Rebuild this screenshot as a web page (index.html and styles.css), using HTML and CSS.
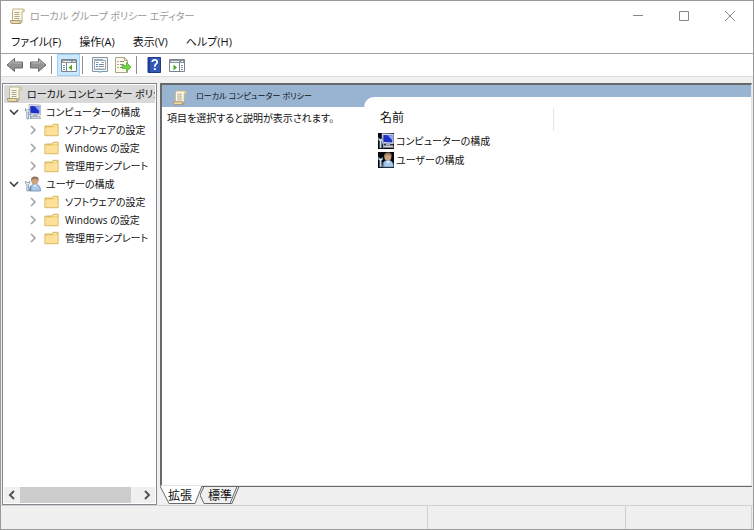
FILE: index.html
```html
<!DOCTYPE html>
<html lang="ja">
<head>
    <meta charset="UTF-8">
    <meta name="viewport" content="width=device-width, initial-scale=1.0">
    <title>ローカル グループ ポリシー エディター</title>
    <link rel="stylesheet" href="styles.css">
</head>
<body>
    <!-- shared icons -->
    <svg class="sprite" aria-hidden="true">
        <symbol id="i-scroll" viewBox="0 0 16 16">
            <path d="M4 1h9.500q2 0 2 1.500T14 4h-1v9H3.500V3z" fill="#fff8e0" stroke="#bdb08c"/>
            <path d="M13 1.200q1.800.200 1.800 1.400T13.200 3.800z" fill="#d7c48f"/>
            <path d="M1.500 12.500h9.500q-.800 3 1 3h-9q-1.800 0-1.500-3z" fill="#ecd9a0" stroke="#a39a7c"/>
            <path d="M11.500 15.300q1.700-.600 1.500-2.800" fill="none" stroke="#a39a7c"/>
            <path d="M5.500 4.500h5M5.500 6.500h5M5.500 8.500h5M5.500 10.500h5" stroke="#a9a498"/>
        </symbol>
        <symbol id="i-folder" viewBox="0 0 16 16">
            <path d="M.5 3.500h8l1.500-2h5.500v13H.500z" fill="#f0cf77" stroke="#d2aa4a"/>
            <path d="M10 3h4.500" stroke="#fff6d8"/>
            <path d="M1 5.500h8.500l1-1H15V14H1z" fill="#fbe19a"/>
        </symbol>
        <symbol id="i-computer" viewBox="0 0 16 16">
            <path d="M4 .5l11.500.5v10L4 10.500z" fill="#dfe3ee" stroke="#8e97b5" stroke-width=".6"/>
            <path d="M5.300 2l9 .300v7.200l-9-.400z" fill="#1c2fc4"/>
            <path d="M9.500 2.200l4.800.1v5z" fill="#8fa8f2"/>
            <path d="M8 10.800h4l.500 1.700H7.500z" fill="#a9afbd"/>
            <path d="M6 12.500h9l.500 2H6z" fill="#d3d6dd" stroke="#8b8f9b" stroke-width=".6"/>
            <path d="M.5 4.500V7l1.300 1V15h1.700V8l1.200-1V4.500L3.500 6H1.800z" fill="#e4edf5" stroke="#5e7891" stroke-width=".6"/>
            <path d="M5.500 8.500V15" stroke="#8ca5ba" stroke-width="1.400"/>
        </symbol>
        <symbol id="i-user" viewBox="0 0 16 16">
            <path d="M4.500 15q0-6 4-6.500h3q4 .5 4 6.500z" fill="#a8c9e8" stroke="#5a84ab" stroke-width=".7"/>
            <path d="M8.500 8.500l1.500 3 1.800-3z" fill="#f4f8fc"/>
            <circle cx="9.800" cy="5" r="3.500" fill="#c9a27e"/>
            <path d="M6 5q-.5-4.500 4-4.500T13.500 5q-1-2.500-3.500-2.500T6 5z" fill="#927258"/>
            <path d="M.5 5v2.500l1.300 1V15h1.700V8.500l1.200-1V5L3.500 6.500H1.800z" fill="#e4edf5" stroke="#5e7891" stroke-width=".6"/>
            <path d="M5.500 10v5" stroke="#6988a5" stroke-width="1.400"/>
        </symbol>
        <symbol id="i-arrow" viewBox="0 0 18 16">
            <path d="M1 8l7.500-6.500V5H16.500v6H8.500v3.500z" fill="#939393" stroke="#6a6a6a"/>
            <path d="M3 7.500L7.500 3.600V6h8" fill="none" stroke="#bdbdbd"/>
        </symbol>
        <symbol id="i-open" viewBox="0 0 10 10">
            <path d="M1 3l4 4 4-4" fill="none" stroke="#404040" stroke-width="1.600"/>
        </symbol>
        <symbol id="i-closed" viewBox="0 0 10 10">
            <path d="M3 1l4 4-4 4" fill="none" stroke="#a0a0a0" stroke-width="1.500"/>
        </symbol>
    </svg>

    <div class="window">
        <header class="title-bar">
            <svg class="icon"><use href="#i-scroll"/></svg>
            <h1>ローカル グループ ポリシー エディター</h1>
            <div class="window-buttons">
                <button aria-label="最小化"><svg viewBox="0 0 10 10"><path d="M0 4.500h10"/></svg></button>
                <button aria-label="最大化"><svg viewBox="0 0 10 10"><path d="M.5.500h9v9h-9z"/></svg></button>
                <button aria-label="閉じる"><svg viewBox="0 0 10 10"><path d="M0 0l10 10M10 0L0 10"/></svg></button>
            </div>
        </header>

        <nav class="menu-bar">
            <button>ファイル(F)</button>
            <button>操作(A)</button>
            <button>表示(V)</button>
            <button>ヘルプ(H)</button>
        </nav>

        <div class="toolbar">
            <button class="tool" aria-label="戻る"><svg class="arrow"><use href="#i-arrow"/></svg></button>
            <button class="tool" aria-label="進む"><svg class="arrow forward"><use href="#i-arrow"/></svg></button>
            <span class="separator"></span>
            <button class="tool active" aria-label="コンソール ツリーの表示">
                <svg class="icon" viewBox="0 0 16 16">
                    <path d="M.5 2.500h15v12H.500z" fill="#fff" stroke="#7b848c"/>
                    <path d="M1 3h14v3H1z" fill="#8a949c"/>
                    <path d="M2 4.500h8" stroke="#eef2f5"/><path d="M12 4.500h2" stroke="#eef2f5"/>
                    <path d="M5.500 6v8" stroke="#7b848c"/>
                    <path d="M2 8.500h2M2 10.500h2M2 12.500h2" stroke="#6d92b5"/>
                    <path d="M11 7.500v6l-3.500-3z" fill="#48a829"/>
                </svg>
            </button>
            <span class="separator"></span>
            <button class="tool" aria-label="プロパティ">
                <svg class="icon" viewBox="0 0 16 16">
                    <path d="M.5.500h15v14H.500z" fill="#f4f6f8" stroke="#8b949c"/>
                    <path d="M2.500 3.500h11v9h-11z" fill="#fff" stroke="#96a7b5"/>
                    <path d="M2 2.500h9M4 5.500h3M9 5.500h3" stroke="#96a7b5"/>
                    <path d="M4 7.500h2M4 9.500h2" stroke="#4e87bd"/>
                    <path d="M7 7.500h5M7 9.500h5" stroke="#7c8790"/>
                    <path d="M4 11.500h8" stroke="#bccbd7"/>
                    <path d="M6 14h4v1.500H6z" fill="#75b8df"/>
                </svg>
            </button>
            <button class="tool" aria-label="一覧のエクスポート">
                <svg class="icon" viewBox="0 0 16 16">
                    <path d="M.5.500h9l3 3v12H.500z" fill="#fffbea" stroke="#aba385"/>
                    <path d="M9.500.500v3h3" fill="none" stroke="#aba385"/>
                    <path d="M2.500 4.500h1M2.500 7.500h1M2.500 10.500h1" stroke="#555"/>
                    <path d="M5 4.500h4M5 7.500h4M5 10.500h2" stroke="#8f8d84"/>
                    <path d="M7 8.500h4.500v-3L16 10l-4.500 4.500v-3H7z" fill="#6fd63c" stroke="#3d9c24" stroke-width=".6"/>
                </svg>
            </button>
            <span class="separator"></span>
            <button class="tool" aria-label="ヘルプ">
                <svg class="icon" viewBox="0 0 16 16">
                    <path d="M2 .5h12.500v15H2z" fill="#3158b8" stroke="#1f3a87"/>
                    <path d="M2 1h2v14H2z" fill="#1f3f97"/>
                    <path d="M6.200 5q.3-2.200 2.600-2.200T11.200 5q0 1.200-1.200 2T8.800 9.800" fill="none" stroke="#fff" stroke-width="1.800"/>
                    <path d="M7.900 11.200h1.900V13H7.900z" fill="#fff"/>
                </svg>
            </button>
            <button class="tool" aria-label="操作ウィンドウの表示">
                <svg class="icon" viewBox="0 0 16 16">
                    <path d="M.5 2.500h15v12H.500z" fill="#fff" stroke="#7b848c"/>
                    <path d="M1 3h14v3H1z" fill="#8a949c"/>
                    <path d="M2 4.500h8" stroke="#eef2f5"/><path d="M12 4.500h2" stroke="#eef2f5"/>
                    <path d="M10.500 6v8" stroke="#7b848c"/>
                    <path d="M12 8.500h2M12 10.500h2M12 12.500h2" stroke="#6d92b5"/>
                    <path d="M4.500 7.500v6l3.500-3z" fill="#48a829"/>
                </svg>
            </button>
        </div>

        <main class="content">
            <section class="tree-pane">
                <ul class="tree">
                    <li>
                        <div class="row root selected"><svg class="icon"><use href="#i-scroll"/></svg><span>ローカル コンピューター ポリシ</span></div>
                        <ul>
                            <li>
                                <div class="row branch"><button aria-label="折りたたむ"><svg><use href="#i-open"/></svg></button><svg class="icon"><use href="#i-computer"/></svg><span>コンピューターの構成</span></div>
                                <ul>
                                    <li class="row leaf"><button aria-label="展開"><svg><use href="#i-closed"/></svg></button><svg class="icon"><use href="#i-folder"/></svg><span>ソフトウェアの設定</span></li>
                                    <li class="row leaf"><button aria-label="展開"><svg><use href="#i-closed"/></svg></button><svg class="icon"><use href="#i-folder"/></svg><span>Windows の設定</span></li>
                                    <li class="row leaf"><button aria-label="展開"><svg><use href="#i-closed"/></svg></button><svg class="icon"><use href="#i-folder"/></svg><span>管理用テンプレート</span></li>
                                </ul>
                            </li>
                            <li>
                                <div class="row branch"><button aria-label="折りたたむ"><svg><use href="#i-open"/></svg></button><svg class="icon"><use href="#i-user"/></svg><span>ユーザーの構成</span></div>
                                <ul>
                                    <li class="row leaf"><button aria-label="展開"><svg><use href="#i-closed"/></svg></button><svg class="icon"><use href="#i-folder"/></svg><span>ソフトウェアの設定</span></li>
                                    <li class="row leaf"><button aria-label="展開"><svg><use href="#i-closed"/></svg></button><svg class="icon"><use href="#i-folder"/></svg><span>Windows の設定</span></li>
                                    <li class="row leaf"><button aria-label="展開"><svg><use href="#i-closed"/></svg></button><svg class="icon"><use href="#i-folder"/></svg><span>管理用テンプレート</span></li>
                                </ul>
                            </li>
                        </ul>
                    </li>
                </ul>
                <div class="scrollbar">
                    <button aria-label="左へ"><svg viewBox="0 0 10 10"><path d="M7 1L3 5l4 4"/></svg></button>
                    <div class="track"><div class="thumb"></div></div>
                    <button aria-label="右へ"><svg viewBox="0 0 10 10"><path d="M3 1l4 4-4 4"/></svg></button>
                </div>
            </section>

            <section class="detail-pane">
                <div class="detail-view">
                    <div class="detail-header">
                        <svg class="icon"><use href="#i-scroll"/></svg>
                        <h2>ローカル コンピューター ポリシー</h2>
                    </div>
                    <div class="detail-body">
                        <p class="description">項目を選択すると説明が表示されます。</p>
                        <div class="list">
                            <div class="list-header"><span>名前</span></div>
                            <ul>
                                <li><svg class="icon dark"><use href="#i-computer"/></svg>コンピューターの構成</li>
                                <li><svg class="icon dark"><use href="#i-user"/></svg>ユーザーの構成</li>
                            </ul>
                        </div>
                    </div>
                </div>
                <div class="tabs">
                    <button class="tab current">
                        <svg viewBox="0 0 42 18"><path d="M0 0l9 17.500h26L42 0" fill="#fff"/><path d="M0 0l9 17.500h26L42 0" fill="none" stroke="#696969"/></svg>
                        <span>拡張</span>
                    </button>
                    <button class="tab">
                        <svg viewBox="0 0 42 18"><path d="M4 .5L0 9l4 8.500h28L39 .500M30 17.500L37 .500" fill="none" stroke="#696969"/></svg>
                        <span>標準</span>
                    </button>
                </div>
            </section>
        </main>

        <footer class="status-bar">
            <span></span>
            <span></span>
            <span></span>
        </footer>
    </div>
</body>
</html>
```
FILE: styles.css
```css
* {
    box-sizing: border-box;
}
body {
    margin: 0;
    font-family: "Open Sans", "Noto Sans CJK JP", sans-serif;
    font-size: 12px;
    line-height: 18px;
    font-feature-settings: "palt";
    color: #111;
}
h1, h2, p, ul {
    margin: 0;
    padding: 0;
    font-size: inherit;
    font-weight: normal;
    list-style: none;
}
button {
    display: flex;
    align-items: center;
    justify-content: center;
    padding: 0;
    border: none;
    background: none;
    font: inherit;
    font-feature-settings: inherit;
    color: inherit;
}
.sprite {
    position: absolute;
    width: 0;
    height: 0;
}
.icon {
    display: block;
    flex: none;
    width: 16px;
    height: 16px;
}
.dark {
    background: #05060c;
}
.window {
    display: flex;
    flex-direction: column;
    height: 100vh;
    border: 1px solid #999;
    background: #f0f0f0;
}

/* title and menus */
.title-bar {
    display: flex;
    align-items: center;
    height: 30px;
    padding-left: 8px;
    gap: 5px;
    background: white;
}
.title-bar h1 {
    flex: 1;
    font-size: 10px;
    color: #999;
}
.window-buttons {
    display: flex;
}
.window-buttons button {
    width: 46px;
    height: 30px;
}
.window-buttons svg {
    width: 10px;
    height: 10px;
    fill: none;
    stroke: #888;
}
.menu-bar {
    display: flex;
    gap: 18px;
    height: 22px;
    padding-left: 10px;
    background: white;
    font-size: 11px;
}
.toolbar {
    display: flex;
    align-items: center;
    height: 24px;
    padding-left: 2px;
    border-top: 1px solid #a0a0a0;
    border-bottom: 1px solid #dcdcdc;
    background: white;
}
.tool {
    width: 23px;
    height: 22px;
}
.tool.active {
    background: #cce8ff;
    border: 1px solid #99d1ff;
}
.arrow {
    width: 18px;
    height: 16px;
}
.forward {
    transform: scaleX(-1);
}
.separator {
    width: 1px;
    height: 18px;
    margin: 0 5px 0 2px;
    background: #8c8c8c;
}

/* panes */
.content {
    display: flex;
    flex: 1;
    min-height: 0;
    gap: 3px;
    padding: 6px 1px 0;
}
.tree-pane {
    display: flex;
    flex-direction: column;
    width: 155px;
    padding: 1px;
    border: 1px solid #828790;
    background: white;
    font-size: 10px;
}
.tree {
    flex: 1;
    overflow: hidden;
}
.row {
    display: flex;
    align-items: center;
    gap: 5px;
    height: 18px;
    white-space: nowrap;
}
.row button, .row button svg {
    width: 10px;
    height: 10px;
}
.root {
    padding-left: 2px;
}
.selected {
    background: #d9d9d9;
}
.branch {
    padding-left: 5px;
}
.branch .icon {
    margin-left: 1px;
}
.leaf {
    padding-left: 24px;
}
.leaf .icon {
    width: 15px;
    height: 14px;
    margin: 0 1px;
}
.scrollbar {
    display: flex;
    height: 16px;
    background: #f0f0f0;
}
.scrollbar button {
    width: 16px;
}
.scrollbar svg {
    width: 10px;
    height: 10px;
    fill: none;
    stroke: #555;
    stroke-width: 2;
}
.track {
    flex: 1;
}
.thumb {
    width: 93%;
    height: 100%;
    background: #cdcdcd;
}
.detail-pane {
    display: flex;
    flex: 1;
    flex-direction: column;
}
.detail-view {
    display: flex;
    flex: 1;
    flex-direction: column;
    border: 1px solid #e3e3e3;
    border-top: 2px solid #696969;
    border-left: 2px solid #696969;
    background: white;
}
.detail-header {
    display: flex;
    align-items: flex-end;
    gap: 9px;
    height: 22px;
    padding: 0 0 2px 10px;
    background: #99b4d1;
    font-size: 8px;
}
.detail-header .icon {
    width: 15px;
    height: 15px;
}
.detail-body {
    display: flex;
    flex: 1;
}
.description {
    width: 202px;
    padding: 2px 5px;
    font-size: 10px;
}
.list {
    flex: 1;
    margin-top: -10px;
    padding: 11px 14px;
    border-radius: 10px 0 0 0;
    background: white;
}
.list-header {
    width: 176px;
    height: 23px;
    padding: 1px 2px;
    border-right: 1px solid #e5e5e5;
}
.list li {
    display: flex;
    align-items: center;
    gap: 2px;
    height: 19px;
    font-size: 10px;
}
.tabs {
    display: flex;
    height: 19px;
    border-top: 1px solid #696969;
}
.tab {
    position: relative;
    width: 40px;
    height: 18px;
}
.tab svg {
    position: absolute;
    top: -1px;
    left: 0;
    width: 42px;
    height: 18px;
}
.tab span {
    position: relative;
}
.current {
    z-index: 1;
}
.status-bar {
    display: flex;
    height: 24px;
    border-top: 1px solid #d0d0d0;
}
.status-bar span {
    flex: 197;
    border-right: 1px solid #d0d0d0;
}
.status-bar span:first-child {
    flex: 428;
}
.status-bar span:last-child {
    flex: 126;
    margin-right: 1px;
}
```
